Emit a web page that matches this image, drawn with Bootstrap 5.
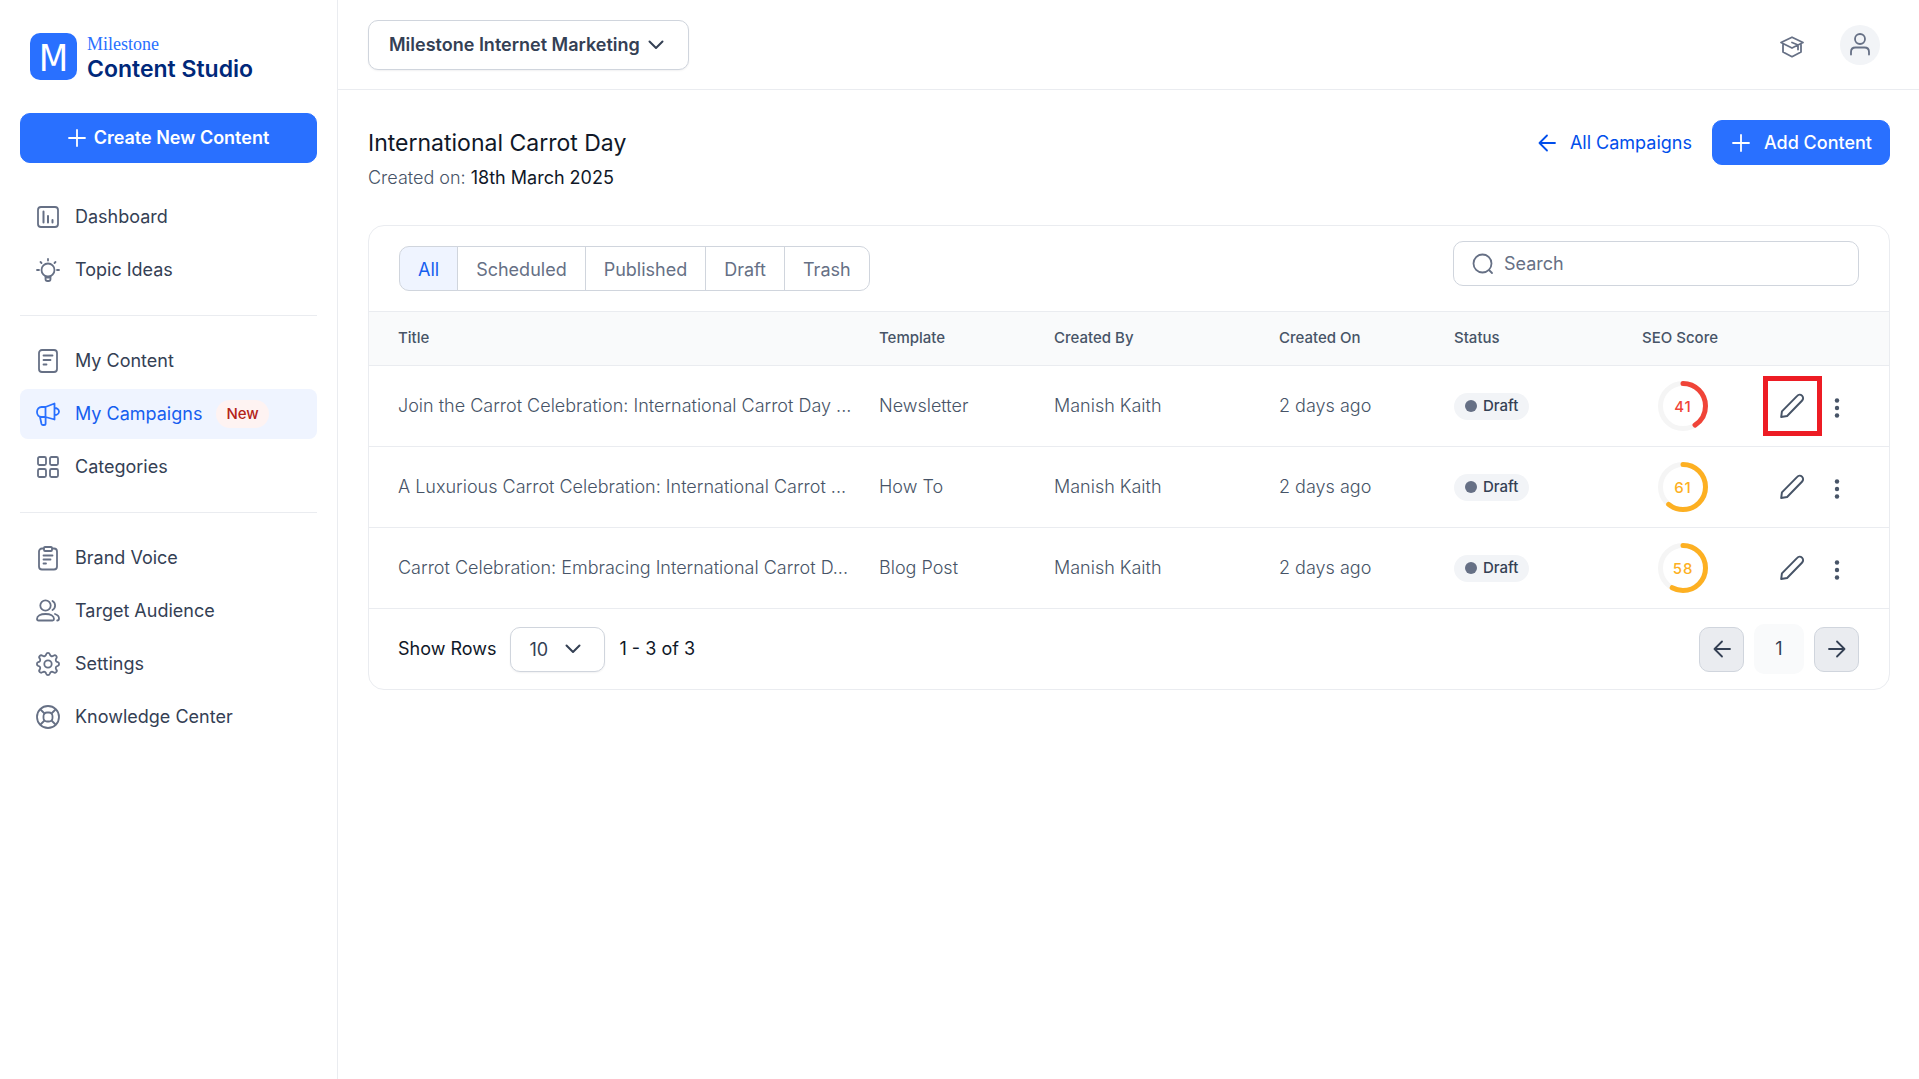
<!DOCTYPE html>
<html lang="en">
<head>
<meta charset="utf-8">
<meta name="viewport" content="width=device-width, initial-scale=1">
<title>International Carrot Day - Content Studio</title>
<link href="https://cdn.jsdelivr.net/npm/bootstrap@5.3.0/dist/css/bootstrap.min.css" rel="stylesheet">
<style>
  :root {
    --brand: #2970ff; --brand-dark: #155eef; --tint: #eff4ff;
    --ink: #101828; --slate: #344054; --muted: #475467; --soft: #667085;
    --line: #eaecf0; --edge: #d0d5dd;
  }
  body { font-family: Inter, "Noto Sans", sans-serif; font-size: 18px; line-height: 28px; color: var(--slate); background: #fff; }
  svg { display: block; flex: none; }
  .icon { fill: none; stroke: currentColor; stroke-width: 1.8; stroke-linecap: round; stroke-linejoin: round; }

  .side-panel { width: 338px; flex: none; border-right: 1px solid var(--line); padding: 33px 20px 20px; }
  .brand-row { gap: 10px; padding: 0 10px; margin-bottom: 31px; height: 49px; }
  .brand-mini { font-family: "Liberation Serif", serif; font-size: 18px; line-height: 23px; color: var(--brand); }
  .brand-name { font-size: 23px; line-height: 26px; font-weight: 600; color: #00287a; }
  .mark-letter { font-family: "DejaVu Sans Condensed", "DejaVu Sans", sans-serif; font-size: 38px; fill: #fff; }
  .btn-brand { --bs-btn-color: #fff; --bs-btn-bg: var(--brand); --bs-btn-border-color: var(--brand); --bs-btn-hover-color: #fff; --bs-btn-hover-bg: var(--brand-dark); font-size: 18px; line-height: 28px; font-weight: 600; border-radius: 10px; }
  .btn-create { height: 50px; margin-bottom: 29px; }
  .side-nav { gap: 3px; }
  .side-nav .nav-link { display: flex; align-items: center; gap: 14px; height: 50px; padding: 0 15px; color: var(--slate); border-radius: 8px; }
  .side-nav .nav-link svg { color: var(--soft); }
  .side-nav .nav-link.active { background: var(--tint); color: var(--brand-dark); }
  .side-nav .nav-link.active svg { color: var(--brand); }
  .side-rule { margin: 20px 0; border-top: 1px solid var(--line); opacity: 1; }
  .pill-new { font-size: 15px; line-height: 28px; font-weight: 500; padding: 0 10px; border-radius: 14px; background: #fef3f2; color: #b42318; }

  .top-bar { height: 90px; padding: 0 39px 0 30px; border-bottom: 1px solid var(--line); }
  .top-tools { gap: 35px; }
  .pick { color: var(--slate); border-color: var(--edge); border-radius: 10px; box-shadow: 0 1px 2px rgba(16,24,40,.06); background-size: 16px 10px; background-image: url("data:image/svg+xml,%3Csvg xmlns='http://www.w3.org/2000/svg' viewBox='0 0 16 10'%3E%3Cpath d='M1.5 1.5 8 8l6.500-6.500' fill='none' stroke='%23344054' stroke-width='2' stroke-linecap='round' stroke-linejoin='round'/%3E%3C/svg%3E"); }
  .pick-org { width: 321px; height: 50px; padding: 0 42px 0 20px; font-size: 18px; font-weight: 600; background-position: right 24px center; }
  .pick-rows { width: 95px; height: 45px; padding: 0 40px 0 18px; font-size: 18px; background-position: right 23px center; }
  .plain-btn { border: 0; background: none; padding: 0; color: var(--soft); }
  .plain-btn.avatar { width: 40px; height: 40px; border-radius: 50%; background: #f2f4f7; }

  .page-body { padding: 30px 29px 30px 30px; }
  .page-title { font-size: 23px; line-height: 36px; font-weight: 400; margin: 5px 0 0; color: var(--ink); }
  .created { margin: 3px 0 0; font-weight: 300; color: var(--muted); }
  .created strong { font-weight: 400; color: var(--ink); }
  .back-link { color: #004eeb; text-decoration: none; }
  .btn-add { height: 45px; padding: 0 17px 0 19px; font-weight: 500; }
  .icon-gap { gap: 14px; }

  .panel { border: 1px solid var(--line); border-radius: 16px; margin-top: 33px; }
  .panel-tools { padding: 15px 30px 20px; }
  .tabs-group { margin-top: 5px; }
  .tabs-group .btn { --bs-btn-color: var(--soft); --bs-btn-border-color: var(--edge); --bs-btn-hover-color: var(--brand-dark); --bs-btn-hover-bg: var(--tint); --bs-btn-active-color: var(--brand-dark); --bs-btn-active-bg: var(--tint); --bs-btn-active-border-color: var(--edge); height: 45px; padding: 2px 18px 0; font-size: 18px; border-radius: 10px; }
  .search-box { width: 406px; height: 45px; padding: 0 18px; gap: 10px; border: 1px solid var(--edge); border-radius: 10px; color: var(--soft); }
  .search-box input { border: 0; outline: 0; padding: 0; width: 100%; background: none; color: var(--slate); }
  .search-box input::placeholder { color: var(--soft); opacity: 1; }

  .data-grid { table-layout: fixed; margin: 0; --bs-table-bg: transparent; border-color: var(--line); }
  .data-grid > :not(caption) > * > * { padding: 0 15px; vertical-align: middle; color: var(--muted); border-bottom: 1px solid var(--line); }
  .data-grid > thead > tr > th { height: 54px; padding-bottom: 2px; font-size: 15px; font-weight: 500; background: #f9fafb; }
  .data-grid > thead { border-top: 1px solid var(--line); }
  .data-grid > tbody > tr > td { height: 81px; font-weight: 300; }
  .data-grid > * > tr > :first-child { padding-left: 29px; padding-right: 2px; }
  .data-grid > * > tr > :last-child { padding: 0; }
  .w-title { width: auto; } .w-template { width: 175px; } .w-by { width: 225px; } .w-on { width: 175px; }
  .w-status { width: 188px; } .w-seo { width: 138px; } .w-act { width: 124px; }
  .pill-draft { display: inline-flex; align-items: center; gap: 6px; height: 27px; padding: 0 11px; border-radius: 14px; background: #f2f4f7; font-size: 15px; font-weight: 500; color: var(--slate); }
  .pill-draft::before { content: ""; width: 12px; height: 12px; border-radius: 50%; background: var(--soft); }
  .score-ring { margin-left: 16px; font-size: 15px; font-weight: 500; letter-spacing: 1px; }
  .score-ring circle { fill: none; stroke-width: 5; stroke-linecap: round; }
  .score-ring .ring-track { stroke: #f5f5f5; }
  .score-low { fill: #f04438; stroke: #f04438; } .score-mid { fill: #fdb022; stroke: #fdb022; }
  .score-ring text { stroke: none; text-anchor: middle; }
  .row-tools { gap: 20px; padding-left: 14px; }
  .row-tools .plain-btn { color: var(--muted); position: relative; }
  .callout-frame { position: absolute; left: -16px; top: -17px; width: 59px; height: 60px; border: 5px solid #ed1c24; pointer-events: none; }

  .panel-foot { height: 80px; padding: 0 30px 0 29px; color: var(--ink); }
  .page-step { width: 45px; height: 45px; padding: 0; border: 1px solid var(--edge); border-radius: 10px; background: #eaecf0; color: var(--slate); }
  .page-num { width: 50px; height: 50px; border: 0; border-radius: 10px; background: #f9fafb; color: var(--slate); }
  .pager { gap: 10px; }
</style>
<script src="https://cdn.jsdelivr.net/npm/bootstrap@5.3.0/dist/js/bootstrap.bundle.min.js"></script>
</head>
<body>
<svg class="d-none" aria-hidden="true">
  <symbol id="plus" viewBox="0 0 18 18"><path d="M9 1v16M1 9h16"/></symbol>
  <symbol id="pencil" viewBox="0 0 24 24"><path d="M2 22.200l.7-5.200L16.800 2.600a3.100 3.100 0 0 1 4.600 4.300L7.500 21.200z"/></symbol>
  <symbol id="dots" viewBox="0 0 6 20"><g fill="currentColor" stroke="none"><circle cx="3" cy="2.500" r="2.200"/><circle cx="3" cy="10" r="2.200"/><circle cx="3" cy="17.500" r="2.200"/></g></symbol>
</svg>

<div class="d-flex min-vh-100">
  <aside class="side-panel">
    <div class="brand-row d-flex">
      <svg width="47" height="47" viewBox="0 0 47 47"><rect width="47" height="47" rx="10" fill="#2970ff"/><text class="mark-letter" x="23.500" y="38" text-anchor="middle">M</text></svg>
      <div>
        <div class="brand-mini">Milestone</div>
        <div class="brand-name text-nowrap">Content Studio</div>
      </div>
    </div>
    <button type="button" class="btn btn-brand btn-create w-100 d-flex align-items-center justify-content-center gap-2">
      <svg class="icon" width="18" height="18"><use href="#plus"/></svg>Create New Content
    </button>
    <nav aria-label="Main">
      <div class="nav flex-column side-nav">
        <a class="nav-link" href="#"><svg class="icon" width="26" height="26" viewBox="0 0 26 26"><rect x="3" y="3" width="20" height="20" rx="3"/><path d="M8.500 7.500v11M13 12v6.500M17.500 16v2.500" stroke-width="2"/></svg>Dashboard</a>
        <a class="nav-link" href="#"><svg class="icon" width="26" height="26" viewBox="0 0 26 26"><circle cx="13" cy="13" r="6.500"/><path d="M10.500 19v3a2 2 0 0 0 2 2h1a2 2 0 0 0 2-2v-3M10.500 20.500h5M13 2v1.500M2 13h2M22 13h2M5.500 5l1 1M20.500 5l-1 1"/></svg>Topic Ideas</a>
      </div>
      <hr class="side-rule">
      <div class="nav flex-column side-nav">
        <a class="nav-link" href="#"><svg class="icon" width="26" height="26" viewBox="0 0 26 26"><rect x="4" y="2" width="18" height="22" rx="3"/><path d="M8.500 7.500h9M8.500 12h7M8.500 16.500h3"/></svg>My Content</a>
        <a class="nav-link active" href="#" aria-current="page"><svg class="icon" width="26" height="26" viewBox="0 0 26 26"><path d="M10.500 6 19.500 2.500v16L10.500 16H6.500A4.500 5 0 0 1 2 11a4.500 5 0 0 1 4.500-5zM10.500 6v10M5 16l1.500 7a1.600 1.600 0 0 0 1.600 1h.9a1.600 1.600 0 0 0 1.600-1.600V16M19.500 7c2.500 0 4.500 1.500 4.500 3.500S22 14 19.500 14"/></svg>My Campaigns <span class="pill-new">New</span></a>
        <a class="nav-link" href="#"><svg class="icon" width="26" height="26" viewBox="0 0 26 26"><rect x="3" y="3" width="8" height="8" rx="1.500"/><rect x="15" y="3" width="8" height="8" rx="1.500"/><rect x="3" y="15" width="8" height="8" rx="1.500"/><rect x="15" y="15" width="8" height="8" rx="1.500"/></svg>Categories</a>
      </div>
      <hr class="side-rule">
      <div class="nav flex-column side-nav">
        <a class="nav-link" href="#"><svg class="icon" width="26" height="26" viewBox="0 0 26 26"><rect x="4" y="3.500" width="18" height="21" rx="3"/><rect x="9" y="2" width="8" height="4" rx="1" fill="#fff"/><path d="M8.500 10.500h9M8.500 14.500h7M8.500 18.500h2.500"/></svg>Brand Voice</a>
        <a class="nav-link" href="#"><svg class="icon" width="26" height="26" viewBox="0 0 26 26"><circle cx="10.500" cy="7.500" r="5.200"/><path d="M2 21c0-3 3.500-5 8.500-5s8.500 2 8.500 5c0 1-.5 1.500-1.500 1.500h-14C2.500 22.500 2 22 2 21zM17.500 3a5.200 5.200 0 0 1 0 9M20 16c2.500.8 4 2.500 4 4.500 0 1.200-.6 2-1.800 2"/></svg>Target Audience</a>
        <a class="nav-link" href="#"><svg class="icon" width="26" height="26" viewBox="0 0 26 26"><circle cx="13" cy="13" r="3.700"/><path d="M11.200 3.200a1.900 1.900 0 0 1 3.600 0c.4 1.900 2 2.600 3.700 1.600a1.900 1.900 0 0 1 2.700 2.700c-1 1.700-.3 3.300 1.600 3.700a1.900 1.900 0 0 1 0 3.600c-1.900.4-2.600 2-1.600 3.700a1.900 1.900 0 0 1-2.700 2.700c-1.700-1-3.300-.3-3.700 1.600a1.900 1.900 0 0 1-3.600 0c-.4-1.900-2-2.600-3.700-1.600a1.900 1.900 0 0 1-2.700-2.700c1-1.700.3-3.300-1.600-3.700a1.900 1.900 0 0 1 0-3.600c1.900-.4 2.600-2 1.600-3.700a1.900 1.900 0 0 1 2.700-2.700c1.700 1 3.300.3 3.700-1.600z"/></svg>Settings</a>
        <a class="nav-link" href="#"><svg class="icon" width="26" height="26" viewBox="0 0 26 26"><circle cx="13" cy="13" r="11"/><rect x="8.500" y="8.500" width="9" height="9" rx="3.500"/><path d="M5.500 5.500 9.500 9.500M20.500 5.500 16.500 9.500M5.500 20.500l4-4M20.500 20.500l-4-4"/></svg>Knowledge Center</a>
      </div>
    </nav>
  </aside>

  <div class="flex-grow-1">
    <header class="top-bar d-flex align-items-center justify-content-between">
      <select class="form-select pick pick-org" aria-label="Organisation"><option>Milestone Internet Marketing</option></select>
      <div class="top-tools d-flex align-items-center">
        <button type="button" class="plain-btn pt-1" aria-label="Academy"><svg class="icon" width="26" height="26" viewBox="0 0 26 26"><path d="M2 8.500 13 3.200l11 5.300L13 14zM4 10v8l9 4.700 9-4.700v-8M13 8.500l6 2.500v4.500"/></svg></button>
        <button type="button" class="plain-btn avatar d-flex align-items-center justify-content-center" aria-label="Account"><svg class="icon" width="24" height="24" viewBox="0 0 24 24"><circle cx="12" cy="6" r="5"/><path d="M3 21.500V19c0-3 1.500-4.500 4.500-4.500h9c3 0 4.500 1.500 4.500 4.500v2.500"/></svg></button>
      </div>
    </header>

    <main class="page-body">
      <div class="d-flex justify-content-between align-items-start">
        <div>
          <h1 class="page-title">International Carrot Day</h1>
          <p class="created">Created on: <strong>18th March 2025</strong></p>
        </div>
        <div class="d-flex align-items-center">
          <a class="back-link d-flex align-items-center icon-gap me-3 pe-1" href="#"><svg class="icon" width="18" height="18" viewBox="0 0 18 18"><path d="M17 9H1.500M9 1.500 1.500 9 9 16.500"/></svg>All Campaigns</a>
          <button type="button" class="btn btn-brand btn-add d-flex align-items-center icon-gap"><svg class="icon" width="18" height="18"><use href="#plus"/></svg>Add Content</button>
        </div>
      </div>

      <section class="panel">
        <div class="panel-tools d-flex justify-content-between align-items-start">
          <div class="btn-group tabs-group" role="group" aria-label="Filter">
            <button type="button" class="btn active">All</button>
            <button type="button" class="btn">Scheduled</button>
            <button type="button" class="btn">Published</button>
            <button type="button" class="btn">Draft</button>
            <button type="button" class="btn">Trash</button>
          </div>
          <label class="search-box d-flex align-items-center">
            <svg class="icon" width="22" height="22" viewBox="0 0 22 22"><circle cx="10.500" cy="10.500" r="9"/><path d="m17.500 17.500 2.500 2.500"/></svg>
            <input type="text" placeholder="Search" aria-label="Search">
          </label>
        </div>

        <table class="table data-grid">
          <colgroup><col class="w-title"><col class="w-template"><col class="w-by"><col class="w-on"><col class="w-status"><col class="w-seo"><col class="w-act"></colgroup>
          <thead>
            <tr><th>Title</th><th>Template</th><th>Created By</th><th>Created On</th><th>Status</th><th class="text-nowrap">SEO Score</th><th></th></tr>
          </thead>
          <tbody>
            <tr>
              <td class="text-truncate">Join the Carrot Celebration: International Carrot Day ...</td><td>Newsletter</td><td>Manish Kaith</td><td>2 days ago</td>
              <td><span class="pill-draft">Draft</span></td>
              <td><svg class="score-ring score-low" width="50" height="50" viewBox="0 0 50 50"><circle class="ring-track" cx="25" cy="25" r="22.500"/><circle cx="25" cy="25" r="22.500" pathLength="100" stroke-dasharray="41 100" transform="rotate(-90 25 25)"/><text x="25" y="31">41</text></svg></td>
              <td><div class="row-tools d-flex align-items-center"><button type="button" class="plain-btn" aria-label="Edit"><svg class="icon" width="26" height="26"><use href="#pencil"/></svg><span class="callout-frame"></span></button><button type="button" class="plain-btn pt-1" aria-label="More"><svg width="26" height="20" viewBox="0 0 26 20"><use href="#dots" x="9" width="6" height="20"/></svg></button></div></td>
            </tr>
            <tr>
              <td class="text-truncate">A Luxurious Carrot Celebration: International Carrot ...</td><td>How To</td><td>Manish Kaith</td><td>2 days ago</td>
              <td><span class="pill-draft">Draft</span></td>
              <td><svg class="score-ring score-mid" width="50" height="50" viewBox="0 0 50 50"><circle class="ring-track" cx="25" cy="25" r="22.500"/><circle cx="25" cy="25" r="22.500" pathLength="100" stroke-dasharray="61 100" transform="rotate(-90 25 25)"/><text x="25" y="31">61</text></svg></td>
              <td><div class="row-tools d-flex align-items-center"><button type="button" class="plain-btn" aria-label="Edit"><svg class="icon" width="26" height="26"><use href="#pencil"/></svg></button><button type="button" class="plain-btn pt-1" aria-label="More"><svg width="26" height="20" viewBox="0 0 26 20"><use href="#dots" x="9" width="6" height="20"/></svg></button></div></td>
            </tr>
            <tr>
              <td class="text-truncate">Carrot Celebration: Embracing International Carrot D...</td><td>Blog Post</td><td>Manish Kaith</td><td>2 days ago</td>
              <td><span class="pill-draft">Draft</span></td>
              <td><svg class="score-ring score-mid" width="50" height="50" viewBox="0 0 50 50"><circle class="ring-track" cx="25" cy="25" r="22.500"/><circle cx="25" cy="25" r="22.500" pathLength="100" stroke-dasharray="58 100" transform="rotate(-90 25 25)"/><text x="25" y="31">58</text></svg></td>
              <td><div class="row-tools d-flex align-items-center"><button type="button" class="plain-btn" aria-label="Edit"><svg class="icon" width="26" height="26"><use href="#pencil"/></svg></button><button type="button" class="plain-btn pt-1" aria-label="More"><svg width="26" height="20" viewBox="0 0 26 20"><use href="#dots" x="9" width="6" height="20"/></svg></button></div></td>
            </tr>
          </tbody>
        </table>

        <div class="panel-foot d-flex align-items-center justify-content-between">
          <div class="d-flex align-items-center icon-gap">
            <label for="rows">Show Rows</label>
            <select id="rows" class="form-select pick pick-rows"><option>10</option><option>25</option></select>
            <span>1 - 3 of 3</span>
          </div>
          <div class="pager d-flex align-items-center">
            <button type="button" class="page-step d-flex align-items-center justify-content-center" aria-label="Previous"><svg class="icon" width="18" height="18" viewBox="0 0 18 18"><path d="M17 9H1.500M9 1.500 1.500 9 9 16.500"/></svg></button>
            <button type="button" class="page-num">1</button>
            <button type="button" class="page-step d-flex align-items-center justify-content-center" aria-label="Next"><svg class="icon" width="18" height="18" viewBox="0 0 18 18"><path d="M1 9h15.500M9 1.500 16.500 9 9 16.500"/></svg></button>
          </div>
        </div>
      </section>
    </main>
  </div>
</div>
</body>
</html>
